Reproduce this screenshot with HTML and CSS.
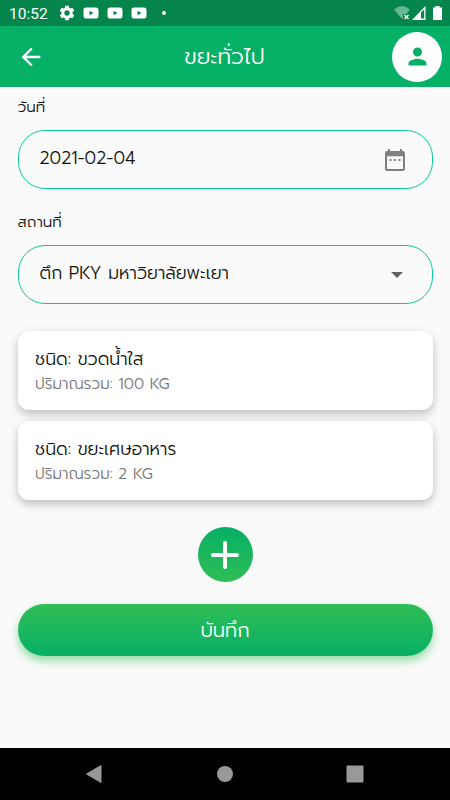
FILE: index.html
```
<!DOCTYPE html>
<html lang="th">
<head>
    <meta charset="UTF-8">
    <meta name="viewport" content="width=device-width, initial-scale=1.0">
    <title>ขยะทั่วไป</title>
    <link rel="stylesheet" href="styles.css">
</head>
<body>
    <div class="status-bar">
        <span class="clock">10:52</span>
        <svg class="gear" width="16" height="16" viewBox="0 0 24 24"><path fill="#fff" fill-rule="evenodd" d="M9.3 1h5.4l.5 3.3 1.8 1 3.1-1.2 2.7 4.6-2.6 2.1v2.4l2.6 2.1-2.7 4.6-3.1-1.2-1.8 1-.5 3.3H9.3l-.5-3.3-1.8-1-3.1 1.2-2.7-4.6 2.6-2.1v-2.4L1.2 8.7l2.7-4.6L7 5.3l1.8-1zM12 8a4 4 0 1 0 0 8 4 4 0 0 0 0-8z"/></svg>
        <svg class="video" width="16" height="12" viewBox="0 0 16 12"><path fill="#fff" fill-rule="evenodd" d="M3 .5h10Q15.5.5 15.5 3v6q0 2.5-2.5 2.5H3Q.5 11.5.5 9V3Q.5.5 3 .5zM6.500 3.700v4.600l4-2.300z"/></svg>
        <svg class="video" width="16" height="12" viewBox="0 0 16 12"><path fill="#fff" fill-rule="evenodd" d="M3 .5h10Q15.5.5 15.5 3v6q0 2.5-2.5 2.5H3Q.5 11.5.5 9V3Q.5.5 3 .5zM6.500 3.700v4.600l4-2.300z"/></svg>
        <svg class="video" width="16" height="12" viewBox="0 0 16 12"><path fill="#fff" fill-rule="evenodd" d="M3 .5h10Q15.5.5 15.5 3v6q0 2.5-2.5 2.5H3Q.5 11.5.5 9V3Q.5.5 3 .5zM6.500 3.700v4.600l4-2.300z"/></svg>
        <span class="dot"></span>
        <svg class="signals" width="50" height="16" viewBox="0 0 50 16">
            <path fill="#fff" fill-opacity=".4" d="M0 4.500Q8-2.500 16 4.500L12.500 9H9v4l-1 1z"/>
            <path stroke="#fff" stroke-width="1.4" d="M10.500 10l4 4m0-4l-4 4"/>
            <path fill="#fff" fill-rule="evenodd" d="M31.500 1v14H18zM27 7.500V13.600h3.200V4.300z"/>
            <path fill="#fff" d="M39 2.500h2.500V1h4v1.500H48V15h-9z"/>
        </svg>
    </div>

    <header class="app-bar">
        <svg width="28" height="28" viewBox="0 0 24 24"><path fill="#fff" d="M20 11H7.830l5.590-5.590L12 4l-8 8 8 8 1.410-1.410L7.830 13H20v-2z"/></svg>
        <h1>ขยะทั่วไป</h1>
        <div class="avatar">
            <svg width="27" height="27" viewBox="0 0 24 24"><path fill="#06b066" d="M12 12c2.210 0 4-1.790 4-4s-1.790-4-4-4-4 1.790-4 4 1.790 4 4 4zm0 2c-2.670 0-8 1.340-8 4v2h16v-2c0-2.660-5.330-4-8-4z"/></svg>
        </div>
    </header>

    <main>
        <div class="form-group">
            <div class="label">วันที่</div>
            <div class="field">
                <span>2021-02-04</span>
                <svg width="20" height="22" viewBox="0 0 20 22"><path fill="#808080" fill-rule="evenodd" d="M3 0h2v2h10V0h2v2h1q2 0 2 2v16q0 2-2 2H2q-2 0-2-2V4q0-2 2-2h1zM2 7.300V20h16V7.300zM4.500 10h2v2h-2zM9 10h2v2H9zM13.500 10h2v2h-2z"/></svg>
            </div>
        </div>
        <div class="form-group">
            <div class="label">สถานที่</div>
            <div class="field">
                <span>ตึก PKY มหาวิยาลัยพะเยา</span>
                <svg class="arrow" width="12" height="6" viewBox="0 0 12 6"><path fill="#616161" d="M0 0h12L6 6z"/></svg>
            </div>
        </div>

        <div class="card">
            <div class="card-title">ชนิด: ขวดน้ำใส</div>
            <div class="card-amount">ปริมาณรวม: 100 KG</div>
        </div>
        <div class="card">
            <div class="card-title">ชนิด: ขยะเศษอาหาร</div>
            <div class="card-amount">ปริมาณรวม: 2 KG</div>
        </div>

        <button class="add" type="button" aria-label="เพิ่ม">
            <svg width="28" height="28" viewBox="0 0 28 28"><path stroke="#fff" stroke-width="4" stroke-linecap="round" d="M14 2v24M2 14h24"/></svg>
        </button>
        <button class="save" type="button">บันทึก</button>
    </main>

    <nav class="nav-bar">
        <svg width="18" height="18" viewBox="0 0 18 18"><path fill="#999" stroke="#999" stroke-linejoin="round" d="M1.500 9l14.500-8.500v17z"/></svg>
        <svg width="18" height="18" viewBox="0 0 18 18"><circle fill="#999" cx="9" cy="9" r="8"/></svg>
        <svg width="18" height="18" viewBox="0 0 18 18"><rect fill="#999" x=".5" y=".5" width="17" height="17" rx="1"/></svg>
    </nav>
</body>
</html>
```
FILE: styles.css
```
* {
    box-sizing: border-box;
}
body {
    margin: 0;
    height: 800px;
    display: flex;
    flex-direction: column;
    background: #fafafa;
    color: #111;
    font-family: Prompt, "Noto Sans Thai", "Open Sans", "Noto Sans", sans-serif;
    font-weight: 300;
    overflow: hidden;
}
svg {
    display: block;
    flex: none;
}
.status-bar {
    height: 26px;
    flex: none;
    display: flex;
    align-items: center;
    padding: 0 6px 0 9px;
    background: #05854c;
    color: #fff;
}
.clock {
    width: 50px;
    font: 400 15.5px/26px Roboto, sans-serif;
    padding-top: 2px;
}
.gear {
    margin-right: 8px;
}
.video {
    margin-right: 8px;
}
.dot {
    width: 4px;
    height: 4px;
    margin-left: 7px;
    border-radius: 50%;
    background: #fff;
}
.signals {
    margin-left: auto;
}
.app-bar {
    height: 61px;
    flex: none;
    display: flex;
    align-items: center;
    justify-content: space-between;
    padding: 0 8px 0 17px;
    background: #06b066;
}
.app-bar h1 {
    margin: 0 0 0 12px;
    color: #fff;
    font-size: 22px;
    font-weight: 300;
}
.avatar {
    width: 50px;
    height: 50px;
    display: flex;
    align-items: center;
    justify-content: center;
    border-radius: 50%;
    background: #fff;
}
main {
    flex: 1;
    padding: 0 17.5px;
}
.form-group {
    height: 115px;
}
.label {
    height: 43px;
    font-size: 15.2px;
    line-height: 40px;
}
.field {
    height: 59px;
    display: flex;
    align-items: center;
    justify-content: space-between;
    padding: 0 27px 0 21px;
    border: 1px solid #0acb98;
    border-radius: 27px;
    font-size: 17.5px;
}
.field span {
    padding-bottom: 4px;
}
.arrow {
    margin-right: 2px;
}
.card {
    height: 79px;
    margin-bottom: 11px;
    padding: 15px 17.5px;
    border-radius: 11px;
    background: #fff;
    box-shadow: 0 4px 10px rgba(0, 0, 0, 0.24);
}
.form-group + .card {
    margin-top: 14px;
}
.card-title {
    height: 26px;
    font-size: 17.5px;
    line-height: 26px;
}
.card-amount {
    height: 24px;
    color: #757575;
    font-size: 15.3px;
    line-height: 24px;
}
button {
    display: flex;
    align-items: center;
    justify-content: center;
    border: none;
    color: #fff;
    font-family: inherit;
    font-weight: 300;
}
.add {
    width: 55px;
    height: 55px;
    margin: 27px auto 22px;
    padding: 0;
    border-radius: 50%;
    background: linear-gradient(#06b066, #30bd55);
}
.save {
    width: 100%;
    height: 52px;
    border-radius: 26px;
    background: linear-gradient(#30bd55, #06b066);
    box-shadow: 0 5px 8px rgba(48, 189, 85, 0.5);
    font-size: 19.6px;
}
.nav-bar {
    height: 52px;
    flex: none;
    display: flex;
    align-items: center;
    justify-content: space-between;
    padding: 0 86px 0 85px;
    background: #000;
}
```
